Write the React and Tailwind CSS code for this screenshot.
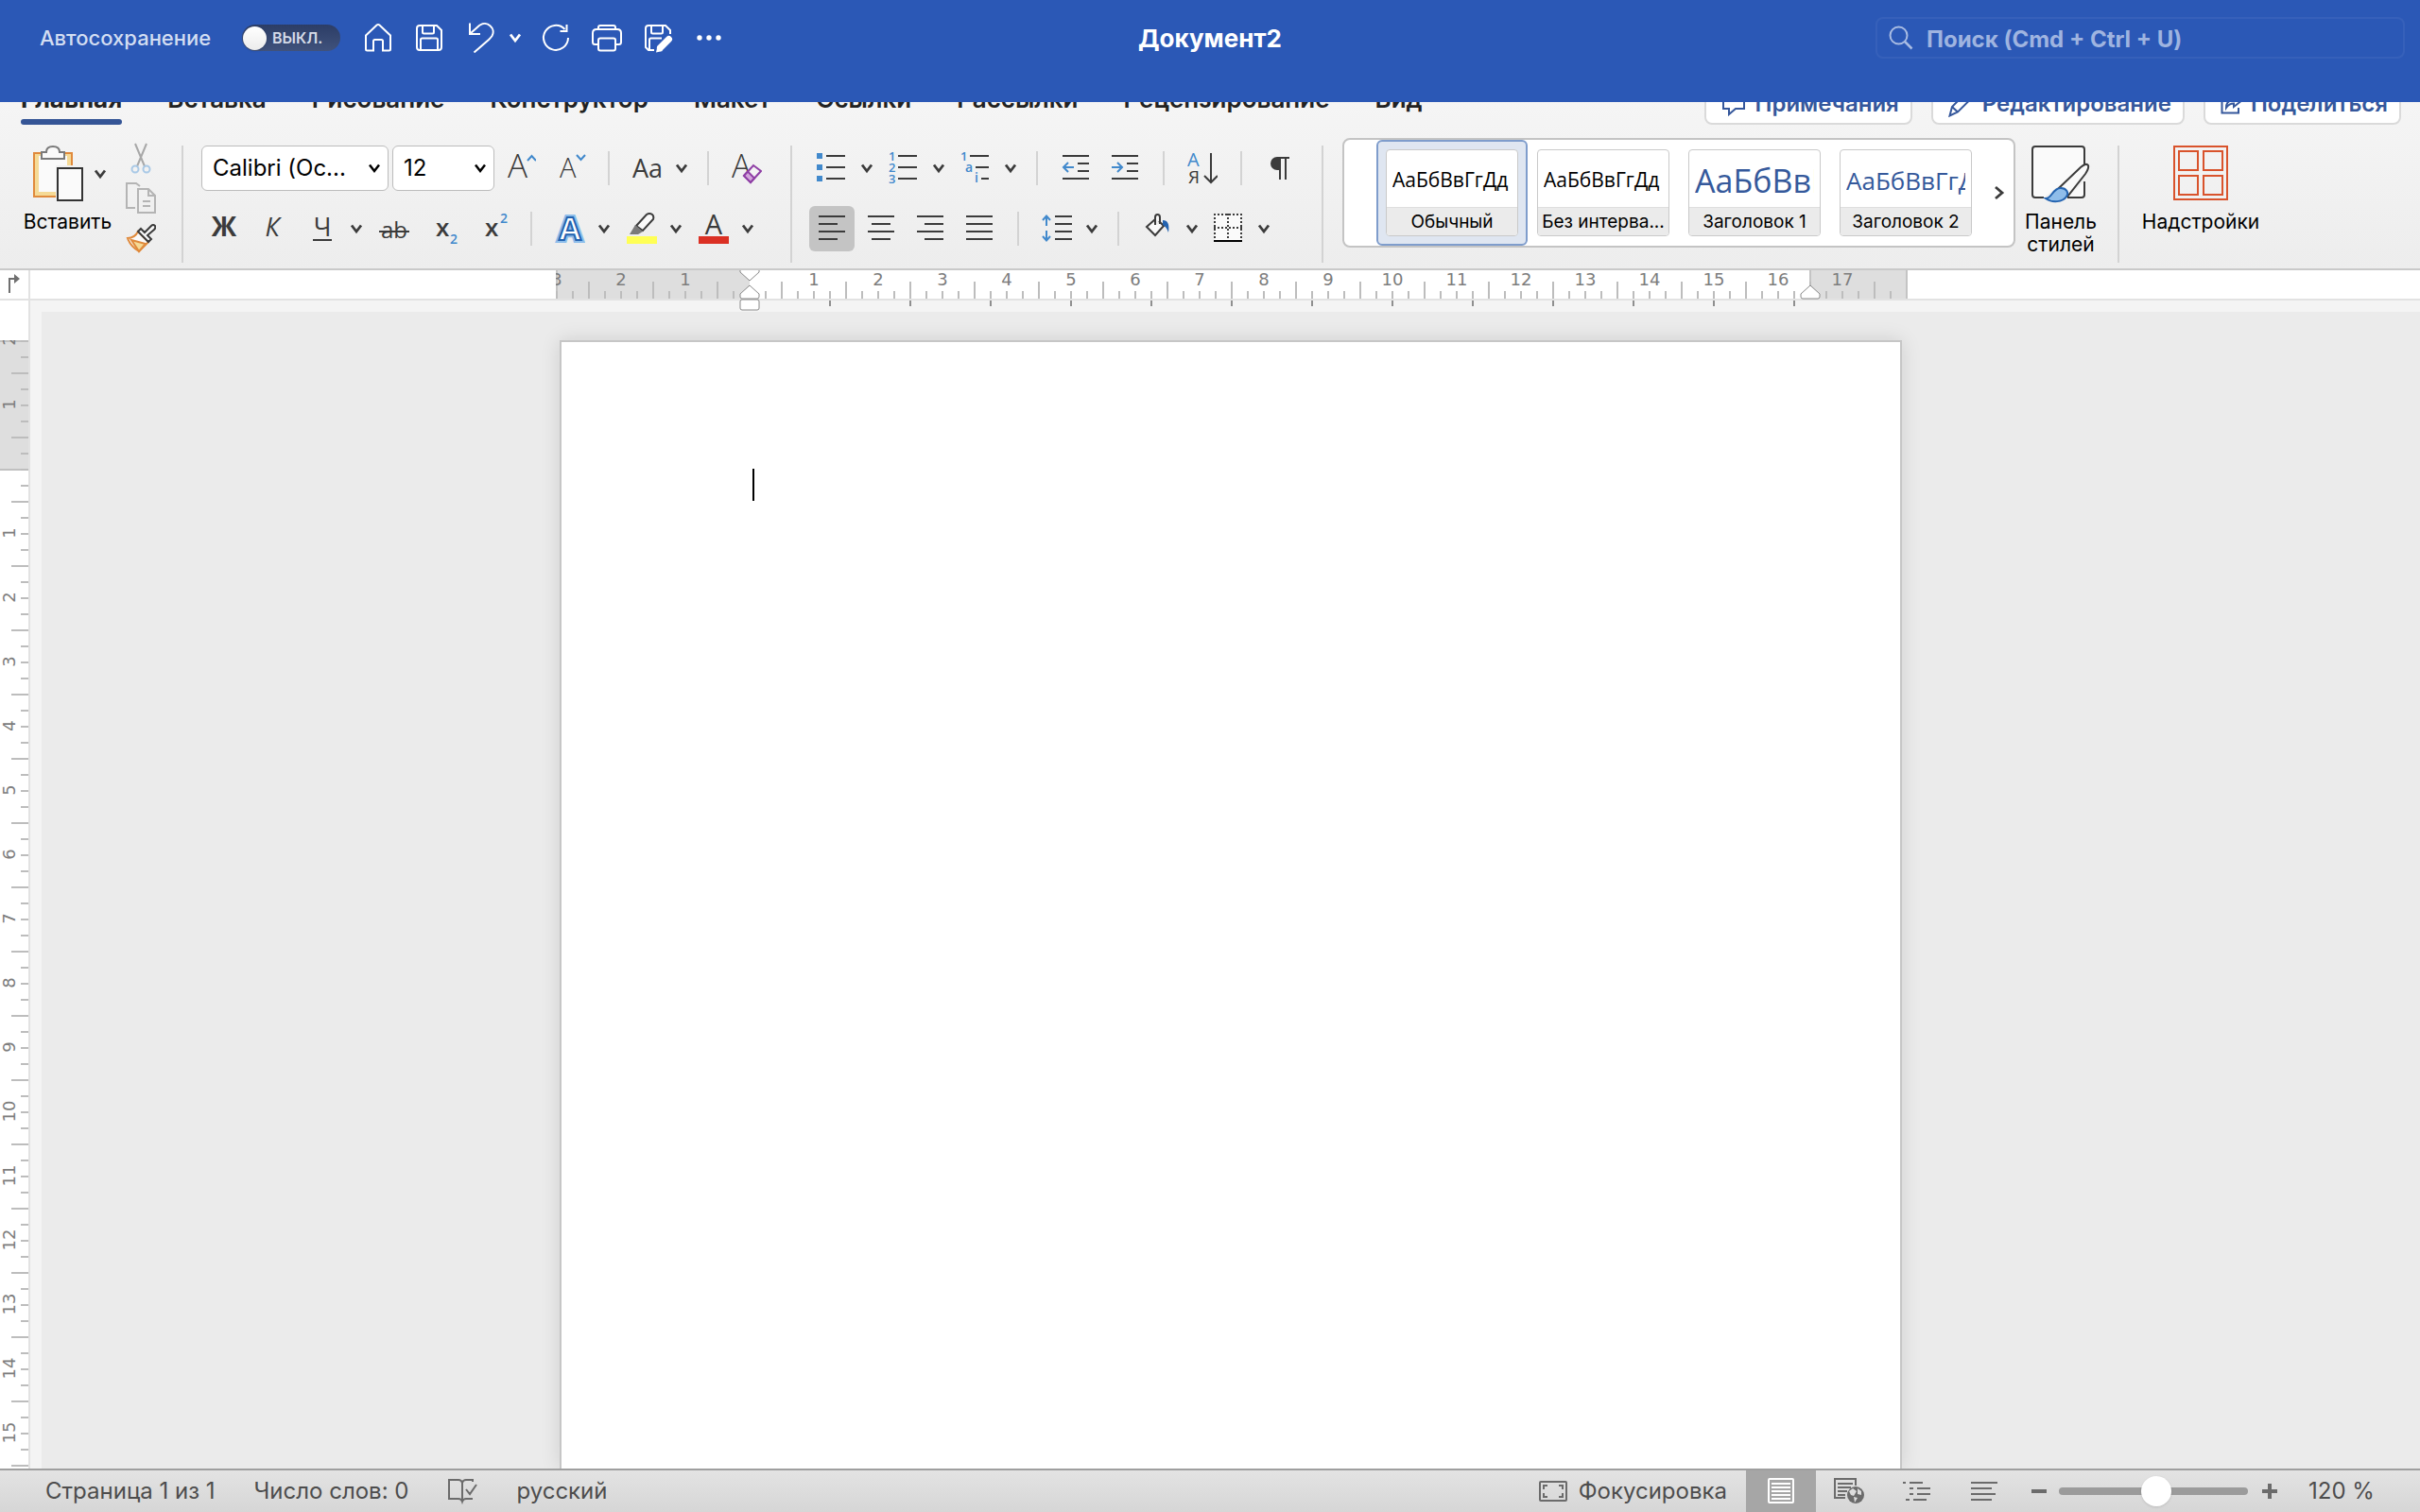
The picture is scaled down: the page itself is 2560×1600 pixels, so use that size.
import { useState } from "react"
import clsx from "clsx"

const CM = 68
const QUARTER = 17

const Svg = ({ w = 32, h = 36, className = "", children }) => (
  <svg
    width={w}
    height={h}
    viewBox={`0 0 ${w} ${h}`}
    fill="none"
    stroke="currentColor"
    strokeWidth="2"
    className={clsx("shrink-0", className)}
    aria-hidden="true"
  >
    {children}
  </svg>
)

const Chevron = ({ label, className }) => (
  <button type="button" aria-label={label} className={clsx("shrink-0", className)}>
    <Svg w={14} h={12}>
      <path d="M2 2.5 L7 9 L12 2.5" strokeWidth="2.8" />
    </Svg>
  </button>
)

const Tool = ({ label, className, children }) => (
  <button type="button" aria-label={label} className={clsx("w-8 shrink-0", className)}>
    <Svg>{children}</Svg>
  </button>
)

const Divider = ({ className }) => <span className={clsx("h-9 w-0.5 shrink-0 bg-[#d3d3d3]", className)} />
const GroupDivider = ({ className }) => (
  <span className={clsx("mt-2 h-[124px] w-0.5 shrink-0 bg-[#d3d3d3]", className)} />
)

// Letters inside toolbar icons
const Glyph = ({ x, y, size, weight = 400, fill = "#3b3b3b", children, ...rest }) => (
  <text x={x} y={y} fontSize={size} fontWeight={weight} fill={fill} stroke="none" fontFamily="Open Sans, sans-serif" {...rest}>
    {children}
  </text>
)

const TitleBar = () => {
  const [autosave, setAutosave] = useState(false)

  return (
    <header className="h-[108px] shrink-0 bg-[#2b58b6] text-white">
      <div className="grid h-20 grid-cols-[1fr_auto_1fr] items-center">
        <div className="flex items-center pl-[42px]">
          <label htmlFor="autosave" className="w-[184px] whitespace-nowrap text-[22px] font-medium text-[#d3def2]">
            Автосохранение
          </label>
          <label className="ml-[30px] flex h-7 w-[104px] items-center gap-1.5 rounded-full bg-gradient-to-b from-[#2c3d66] to-[#40527c] pl-px">
            <input
              id="autosave"
              type="checkbox"
              checked={autosave}
              onChange={(e) => setAutosave(e.target.checked)}
              className="sr-only"
            />
            <span className="h-[25px] w-[25px] rounded-full bg-gradient-to-b from-white to-[#ececec] shadow" />
            <span className="text-base font-semibold text-[#d5dbe8]">{autosave ? "ВКЛ." : "ВЫКЛ."}</span>
          </label>

          <button type="button" aria-label="Домой" className="ml-6">
            <Svg h={32}>
              <path d="M3 13.5 L14.6 2.6 Q16 1.4 17.4 2.6 L29 13.5 V28 Q29 29.5 27.5 29.5 H21 V19.5 Q21 18 19.5 18 H12.5 Q11 18 11 19.5 V29.5 H4.5 Q3 29.5 3 28 Z" />
            </Svg>
          </button>
          <button type="button" aria-label="Сохранить" className="ml-[22px]">
            <Svg h={32}>
              <path d="M6 3 H24 L29 8 V26 Q29 29 26 29 H6 Q3 29 3 26 V6 Q3 3 6 3 Z" />
              <path d="M9 3 V10 Q9 11.5 10.5 11.5 H19.5 Q21 11.5 21 10 V3 M7 29 V18 Q7 16.5 8.5 16.5 H23.5 Q25 16.5 25 18 V29" />
            </Svg>
          </button>
          <button type="button" aria-label="Отменить" className="ml-6">
            <Svg h={32}>
              <path d="M3 0.5 V12 H14 M3.5 11.5 L13 3 C21 -3 31 6 26.5 14 C25.5 15.5 24.5 16.5 23 18 L7.5 31.5" />
            </Svg>
          </button>
          <Chevron label="Список отмены" className="ml-3" />
          <button type="button" aria-label="Повторить" className="ml-5">
            <Svg h={32}>
              <path d="M29 16 A13 13 0 1 1 25.5 7 M27.5 2 V9 H20.5" />
            </Svg>
          </button>
          <button type="button" aria-label="Печать" className="ml-[22px]">
            <Svg h={32}>
              <path d="M7 7 V5 Q7 3 9 3 H23 Q25 3 25 5 V7 M7 23 H3.5 Q1 23 1 20.5 V11 Q1 7 5 7 H27 Q31 7 31 11 V20.5 Q31 23 28.5 23 H25" />
              <rect x="7" y="16.5" width="18" height="13" rx="2" />
            </Svg>
          </button>
          <button type="button" aria-label="Сохранить как" className="ml-[22px]">
            <Svg h={32}>
              <path d="M29 12 V8 L24 3 H6 Q3 3 3 6 V26 L6 29 H12 M9 3 V10 Q9 11.5 10.5 11.5 H19.5 Q21 11.5 21 10 V3 M7 29 V18 Q7 16.5 8.5 16.5 H20" />
              <path d="M18.5 26.5 L27.5 17.5" strokeWidth="7" strokeLinecap="round" />
              <path d="M14 31.5 L15.5 24.5 L21 30 Z" fill="currentColor" stroke="none" />
            </Svg>
          </button>
          <button type="button" aria-label="Ещё" className="ml-[22px]">
            <Svg h={32}>
              <g fill="currentColor" stroke="none">
                <circle cx="6" cy="16" r="2.7" />
                <circle cx="16" cy="16" r="2.7" />
                <circle cx="26" cy="16" r="2.7" />
              </g>
            </Svg>
          </button>
        </div>

        <h1 className="text-[26px] font-bold">Документ2</h1>

        <label className="mr-4 flex h-11 w-[560px] items-center gap-3.5 justify-self-end rounded-lg border-2 border-white/5 pl-3">
          <Svg w={26} h={26} className="text-[#a9bce3]">
            <circle cx="10.5" cy="10.5" r="9" />
            <path d="M17 17 L24.5 24.5" strokeWidth="2.5" />
          </Svg>
          <input
            type="search"
            aria-label="Поиск"
            placeholder="Поиск (Cmd + Ctrl + U)"
            className="h-10 min-w-0 flex-1 bg-transparent pt-0.5 text-2xl font-bold outline-none placeholder:text-[#9fb4e0]"
          />
        </label>
      </div>
    </header>
  )
}

const tabs = [
  "Главная",
  "Вставка",
  "Рисование",
  "Конструктор",
  "Макет",
  "Ссылки",
  "Рассылки",
  "Рецензирование",
  "Вид",
]

const ActionButton = ({ icon, children }) => (
  <button
    type="button"
    className="flex h-11 items-center gap-2.5 rounded-lg border-2 border-[#dadada] bg-white pl-4 pr-3 text-2xl font-semibold text-[#35579b]"
  >
    {icon}
    {children}
  </button>
)

const Tabs = () => {
  const [active, setActive] = useState("Главная")

  return (
    <div className="flex h-6 items-end justify-between overflow-hidden pl-[22px] pr-5">
      <nav className="flex gap-12">
        {tabs.map((tab) => (
          <button key={tab} type="button" onClick={() => setActive(tab)} className="flex flex-col gap-[5px]">
            <span className={clsx("text-[26px] leading-8 text-[#222]", tab === active ? "font-bold" : "font-semibold")}>
              {tab}
            </span>
            <span className={clsx("h-1.5 w-full rounded-full", tab === active && "bg-[#355596]")} />
          </button>
        ))}
      </nav>
      <div className="flex gap-5">
        <ActionButton
          icon={
            <Svg w={26} h={26}>
              <path d="M2 2 H24 V18 H15 L8 24 V18 H2 Z" />
            </Svg>
          }
        >
          Примечания
        </ActionButton>
        <ActionButton
          icon={
            <Svg w={26} h={28}>
              <path d="M1.5 26.5 L4 17 L18 3 Q21 1 23.5 3.5 Q25.5 6 23.5 9 L10 22.5 Z M4 17 L10 22.5" />
            </Svg>
          }
        >
          Редактирование
        </ActionButton>
        <ActionButton
          icon={
            <Svg w={22} h={22}>
              <path d="M9 3 H1.5 V20.5 H19 V15 M6 15 C6 9 10 7 14 7 V3 L20.5 9 L14 14 V10.5 C10 10.5 8 12 6 15 Z" />
            </Svg>
          }
        >
          Поделиться
        </ActionButton>
      </div>
    </div>
  )
}

const Clipboard = () => (
  <div className="mt-1 flex">
    <div className="flex w-[93px] flex-col items-center">
      <div className="flex items-center">
        <button type="button" aria-label="Вставить из буфера">
          <Svg w={58} h={68}>
            <rect x="5" y="12" width="40" height="46" fill="#f5da96" stroke="#e08a3c" />
            <rect x="10" y="15" width="30" height="38" fill="#fafafa" stroke="none" />
            <path
              d="M13 11 H18 C18 6 22 5 25 5 C28 5 32 6 32 11 H37 V18 H13 Z"
              fill="#fafafa"
              stroke="#7a7a7a"
            />
            <rect x="28" y="25" width="28" height="36" fill="#f1f1f1" stroke="none" />
            <rect x="30" y="28" width="26" height="34" fill="#fafafa" stroke="#333" />
          </Svg>
        </button>
        <Chevron label="Параметры вставки" className="ml-2.5 text-[#3b3b3b]" />
      </div>
      <span className="mt-[5px] text-[21px] leading-6 text-black">Вставить</span>
    </div>
    <div className="ml-[15px] flex flex-col gap-2">
      <button type="button" aria-label="Вырезать">
        <Svg h={34}>
          <path d="M10 2 L20 26 M22 2 L12 26" stroke="#a8a8a8" />
          <circle cx="10" cy="29" r="3.5" stroke="#a9c9e6" />
          <circle cx="22" cy="29" r="3.5" stroke="#a9c9e6" />
        </Svg>
      </button>
      <button type="button" aria-label="Копировать">
        <Svg h={34}>
          <path
            d="M10 28 H1 V2 H11 L15 5 M13 8 H24 L31 15 V33 H13 Z M24 8 V15 H31 M18 21 H26 M18 26 H26"
            stroke="#b4b4b4"
          />
        </Svg>
      </button>
      <button type="button" aria-label="Формат по образцу" className="mt-0.5">
        <Svg h={34}>
          <path d="M2 16 C7 16 11 13 13 9 L24 20 L14 30 C9 27 4 22 2 16 Z" fill="#fafafa" stroke="#e08a3c" />
          <path d="M6 18 L21 22 L14 30 Z" fill="#f5da96" stroke="#e08a3c" />
          <path
            d="M13 9 L16 6 L20 10 L27 3 Q29 1 31 3 Q32 5 30 7 L23 13 L27 17 L24 20 Z"
            fill="#fafafa"
            stroke="#3b3b3b"
          />
        </Svg>
      </button>
    </div>
  </div>
)

const Dropdown = ({ label, value, options, onChange, className }) => (
  <div className={clsx("relative shrink-0 text-black", className)}>
    <select
      aria-label={label}
      value={value}
      onChange={(e) => onChange(e.target.value)}
      className="h-12 w-full appearance-none rounded-md border border-[#bcbcbc] bg-white pl-[11px] text-2xl outline-none"
    >
      {options.map((option) => (
        <option key={option}>{option}</option>
      ))}
    </select>
    <Svg w={14} h={12} className="pointer-events-none absolute right-2 top-[18px]">
      <path d="M2 2.5 L7 9 L12 2.5" strokeWidth="2.5" />
    </Svg>
  </div>
)

const FontGroup = () => {
  const [font, setFont] = useState("Calibri (Ос...")
  const [size, setSize] = useState("12")

  return (
    <div className="mt-2 flex flex-col gap-4">
      <div className="flex h-12 items-center">
        <Dropdown
          label="Шрифт"
          value={font}
          onChange={setFont}
          options={["Calibri (Ос...", "Arial", "Times New Roman"]}
          className="w-[198px]"
        />
        <Dropdown
          label="Размер шрифта"
          value={size}
          onChange={setSize}
          options={["10", "11", "12", "14"]}
          className="ml-1 w-[108px]"
        />
        <Tool label="Увеличить размер" className="ml-3">
          <Glyph x="2" y="28" size="35" weight={300}>А</Glyph>
          <path d="M23 10 L27.5 5 L32 10" stroke="#4189cc" />
        </Tool>
        <Tool label="Уменьшить размер" className="ml-6">
          <Glyph x="1" y="28" size="29" weight={300}>А</Glyph>
          <path d="M19 4 L23.5 9 L28 4" stroke="#4189cc" />
        </Tool>
        <Divider className="ml-5" />
        <Tool label="Регистр" className="ml-6">
          <Glyph x="0" y="28" size="27">Аа</Glyph>
        </Tool>
        <Chevron label="Параметры регистра" className="ml-[13px]" />
        <Divider className="ml-5" />
        <Tool label="Очистить формат" className="ml-6">
          <Glyph x="0" y="28" size="34" weight={300}>А</Glyph>
          <path d="M13 26 L23 15 L31 21 L20 33 Z" fill="#f4f4f4" stroke="#8f3fa5" />
          <path d="M13 26 L17 21.5 L24 28.5 L20 33 Z" fill="#d3a6dc" stroke="#8f3fa5" />
        </Tool>
      </div>
      <div className="flex h-12 items-center pl-2">
        <Tool label="Полужирный">
          <Glyph x="16" y="26" size="28" weight={700} textAnchor="middle">Ж</Glyph>
        </Tool>
        <Tool label="Курсив" className="ml-5">
          <Glyph x="15" y="26" size="27" textAnchor="middle" fontStyle="italic">К</Glyph>
        </Tool>
        <Tool label="Подчёркнутый" className="ml-5">
          <Glyph x="16" y="26" size="27" textAnchor="middle">Ч</Glyph>
          <path d="M6 30 H26" />
        </Tool>
        <Chevron label="Параметры подчёркивания" className="ml-[13px]" />
        <Tool label="Зачёркнутый" className="ml-[17px]">
          <Glyph x="16" y="28" size="24" textAnchor="middle">ab</Glyph>
          <path d="M0 21 H32" />
        </Tool>
        <Tool label="Подстрочный" className="ml-6">
          <Glyph x="4" y="26" size="26" weight={600}>x</Glyph>
          <Glyph x="19" y="34" size="14" weight={600} fill="#4189cc">2</Glyph>
        </Tool>
        <Tool label="Надстрочный" className="ml-5">
          <Glyph x="4" y="26" size="26" weight={600}>x</Glyph>
          <Glyph x="20" y="12" size="14" weight={600} fill="#4189cc">2</Glyph>
        </Tool>
        <Divider className="ml-5" />
        <Tool label="Эффекты текста" className="ml-6">
          <text x="16" y="30" fontSize="34" fontWeight="700" textAnchor="middle" fontFamily="Open Sans, sans-serif" fill="none" stroke="#8dbdea" strokeWidth="6">
            А
          </text>
          <text x="16" y="30" fontSize="34" fontWeight="700" textAnchor="middle" fontFamily="Open Sans, sans-serif" fill="#fff" stroke="#2363b0" strokeWidth="2">
            А
          </text>
        </Tool>
        <Chevron label="Параметры эффектов" className="ml-[13px]" />
        <Tool label="Цвет выделения" className="ml-[17px]">
          <rect x="0" y="26" width="32" height="8" fill="#ffff55" stroke="none" />
          <path d="M10 15 L21 3 Q24 1 27 3 Q29 5 28 8 L17 20 Z" fill="#fafafa" stroke="#3b3b3b" />
          <path d="M9 14 L17 21 L12 24 H3 Z" fill="#7a7a7a" stroke="none" />
        </Tool>
        <Chevron label="Параметры выделения" className="ml-[13px]" />
        <Tool label="Цвет текста" className="ml-[17px]">
          <rect x="0" y="26" width="32" height="8" fill="#db3024" stroke="none" />
          <Glyph x="16" y="24" size="29" textAnchor="middle">А</Glyph>
        </Tool>
        <Chevron label="Параметры цвета" className="ml-[13px]" />
      </div>
    </div>
  )
}

const alignments = [
  { id: "left", label: "По левому краю", d: "M2 5 H30 M2 13 H22 M2 21 H30 M2 29 H22" },
  { id: "center", label: "По центру", d: "M2 5 H30 M6 13 H26 M2 21 H30 M6 29 H26" },
  { id: "right", label: "По правому краю", d: "M2 5 H30 M10 13 H30 M2 21 H30 M10 29 H30" },
  { id: "justify", label: "По ширине", d: "M2 5 H30 M2 13 H30 M2 21 H30 M2 29 H30" },
]

const ParagraphGroup = () => (
  <div className="mt-2 flex flex-col gap-4">
    <div className="flex h-12 items-center pl-2">
      <Tool label="Маркеры">
        <path d="M0 5 H6 M0 17 H6 M0 29 H6" stroke="#4189cc" strokeWidth="6" />
        <path d="M10 5 H30 M10 17 H30 M10 29 H30" />
      </Tool>
      <Chevron label="Параметры маркеров" className="ml-3.5" />
      <Tool label="Нумерация" className="ml-4">
        <Glyph x="0" y="10" size="13" weight={600} fill="#4189cc">1</Glyph>
        <Glyph x="0" y="22" size="13" weight={600} fill="#4189cc">2</Glyph>
        <Glyph x="0" y="34" size="13" weight={600} fill="#4189cc">3</Glyph>
        <path d="M10 5 H30 M10 17 H30 M10 29 H30" />
      </Tool>
      <Chevron label="Параметры нумерации" className="ml-3.5" />
      <Tool label="Многоуровневый список" className="ml-4">
        <Glyph x="0" y="10" size="13" weight={600} fill="#4189cc">1</Glyph>
        <Glyph x="5" y="22" size="14" weight={600} fill="#4189cc">a</Glyph>
        <Glyph x="15" y="33" size="14" weight={600} fill="#4189cc">i</Glyph>
        <path d="M10 5 H30 M16 17 H30 M22 29 H30" />
      </Tool>
      <Chevron label="Параметры списка" className="ml-3.5" />
      <Divider className="ml-5" />
      <Tool label="Уменьшить отступ" className="ml-6">
        <path d="M2 5 H30 M18 13 H30 M18 21 H30 M2 29 H30" />
        <path d="M14 17 H3 M8 12 L3 17 L8 22" stroke="#4189cc" />
      </Tool>
      <Tool label="Увеличить отступ" className="ml-5">
        <path d="M2 5 H30 M18 13 H30 M18 21 H30 M2 29 H30" />
        <path d="M2 17 H13 M8 12 L13 17 L8 22" stroke="#4189cc" />
      </Tool>
      <Divider className="ml-6" />
      <Tool label="Сортировка" className="ml-6">
        <Glyph x="0" y="16" size="20" fill="#4189cc">А</Glyph>
        <Glyph x="1" y="34" size="19">Я</Glyph>
        <path d="M25 2 V33 M18 26 L25 33 L32 26" />
      </Tool>
      <Divider className="ml-6" />
      <Tool label="Непечатаемые символы" className="ml-6">
        <path d="M13 7 H26 M16 7 V30 M22 7 V30" />
        <path d="M16 6 H13 A7 7 0 0 0 13 20 H16 Z" fill="currentColor" stroke="none" />
      </Tool>
    </div>
    <div className="flex h-12 items-center">
      {alignments.map(({ id, label, d }) => (
        <button
          key={id}
          type="button"
          aria-label={label}
          className={clsx(
            "flex h-12 shrink-0 items-center justify-center",
            id === "left" && "w-12 rounded-md bg-[#c4c4c4]",
            id === "center" && "ml-3 w-8",
            (id === "right" || id === "justify") && "ml-5 w-8",
          )}
        >
          <Svg>
            <path d={d} />
          </Svg>
        </button>
      ))}
      <Divider className="ml-6" />
      <Tool label="Интервал" className="ml-6">
        <path d="M14 5 H32 M14 13 H32 M14 21 H32 M14 29 H32" />
        <path d="M5 15 V5 M1 9 L5 4.5 L9 9 M5 20 V30 M1 26 L5 30.5 L9 26" stroke="#4189cc" />
      </Tool>
      <Chevron label="Параметры интервала" className="ml-3.5" />
      <Divider className="ml-5" />
      <Tool label="Заливка" className="ml-6">
        <path d="M14 8 L5 16 L14 25 L23 15 L18 10 M14 14 V6 Q14 3 16.5 3 Q19 3 19 6 V13" fill="#fafafa" />
        <path d="M22 9 Q30 9 28 22 Q26 16 22 14 Z" fill="#2363b0" stroke="none" />
      </Tool>
      <Chevron label="Параметры заливки" className="ml-3.5" />
      <Tool label="Границы" className="ml-4">
        <rect x="1" y="3" width="28" height="29" fill="#fafafa" stroke="none" />
        <path d="M0 3 H30 M1 2 V30 M29 2 V30 M15 2 V30 M0 17 H30" strokeDasharray="2 2" />
        <path d="M0 31 H30" stroke="#000" />
      </Tool>
      <Chevron label="Параметры границ" className="ml-3.5" />
    </div>
  </div>
)

const docStyles = [
  { name: "Обычный", sample: "АаБбВвГгДд", text: "text-[21px] text-black" },
  { name: "Без интерва...", sample: "АаБбВвГгДд", text: "text-[21px] text-black" },
  { name: "Заголовок 1", sample: "АаБбВвГгДд", text: "text-[34px] text-[#35599b]" },
  { name: "Заголовок 2", sample: "АаБбВвГгДд", text: "text-[26px] text-[#35599b]" },
]

const StyleGallery = () => {
  const [selected, setSelected] = useState("Обычный")

  return (
    <div className="ml-5 flex h-[116px] w-[712px] shrink-0 items-center justify-between rounded-lg border-2 border-[#c4c4c4] bg-white pl-[34px] pr-2">
      <div className="flex">
        {docStyles.map(({ name, sample, text }) => (
          <button
            key={name}
            type="button"
            onClick={() => setSelected(name)}
            className={clsx(
              "w-40 rounded-md border-2 p-2",
              selected === name ? "border-[#7f9dcc] bg-[#dfe6f1]" : "border-transparent",
            )}
          >
            <span className="block overflow-hidden rounded-sm border border-[#c9c9c9] bg-white">
              <span
                className={clsx(
                  "mx-1.5 flex h-[60px] items-center overflow-hidden whitespace-nowrap pt-1 font-['Open_Sans',sans-serif]",
                  text,
                )}
              >
                {sample}
              </span>
              <span className="block h-[30px] border-t border-[#dedede] bg-[#ebebeb] text-[19px] leading-[29px] text-black">
                {name}
              </span>
            </span>
          </button>
        ))}
      </div>
      <button type="button" aria-label="Другие стили">
        <Svg w={14} h={16}>
          <path d="M3 2 L10 8 L3 14" strokeWidth="2.8" />
        </Svg>
      </button>
    </div>
  )
}

const Ribbon = () => (
  <section className="h-[178px] shrink-0 border-b-2 border-[#c9c9c9] bg-gradient-to-b from-[#f5f5f5] to-[#ededed] text-[#3b3b3b]">
    <Tabs />
    <div className="flex items-start pl-[25px] pt-3.5">
      <Clipboard />
      <GroupDivider className="ml-[27px] mr-[19px]" />
      <FontGroup />
      <GroupDivider className="ml-[30px] mr-[18px]" />
      <ParagraphGroup />
      <GroupDivider className="ml-7" />
      <StyleGallery />
      <button type="button" className="ml-2 mt-2 flex w-20 shrink-0 flex-col items-center gap-[7px]">
        <Svg w={62} h={62}>
          <path d="M56 22 V4 Q56 1 53 1 H4 Q1 1 1 4 V52 Q1 55 4 55 H13 M38 55 H53 Q56 55 56 52 V38" fill="#fafafa" />
          <path d="M28 46 L52 23 Q58 18 60 21 Q61 24 57 30 L38 54 Z" fill="#fafafa" />
          <path
            d="M15 56 C22 56 22 45 31 45 C37 45 40 50 37 54 C33 60 22 61 15 56 Z"
            fill="#8fbdea"
            stroke="#2363b0"
          />
        </Svg>
        <span className="text-[21px] leading-6 text-black">Панель стилей</span>
      </button>
      <GroupDivider className="ml-5" />
      <button type="button" className="ml-6 mt-2 flex w-[124px] shrink-0 flex-col items-center gap-[7px]">
        <Svg w={58} h={62} className="text-[#d9532c]">
          <rect x="1" y="1" width="56" height="56" />
          <path d="M6 6 H26 V26 H6 Z M32 6 H52 V26 H32 Z M6 32 H26 V52 H6 Z M32 32 H52 V52 H32 Z" />
        </Svg>
        <span className="text-[21px] leading-6 text-black">Надстройки</span>
      </button>
    </div>
  </section>
)

const HorizontalRuler = () => {
  const zero = 207
  const end = 1329
  const ticks = []
  for (let i = -12; i <= 71; i++) ticks.push(i)
  const labels = []
  for (let i = -3; i <= 17; i++) if (i !== 0) labels.push(i)
  const stops = Array.from({ length: 13 }, (_, i) => zero + (i + 1) * 85)

  return (
    <div className="relative z-10 flex h-8 justify-center border-b-2 border-[#e2e2e2] bg-white pl-3">
      <svg width="1432" height="44" className="shrink-0" aria-hidden="true">
        <rect x="2" y="0" width={zero - 2} height="30" fill="#dedede" />
        <rect x={end} y="0" width={1432 - end} height="30" fill="#dedede" />
        <path d={`M${end} 0 V30 M1431 0 V30 M3 0 V30`} stroke="#c4c4c4" strokeWidth="2" />
        {ticks.map((i) => (
          <path
            key={i}
            d={`M${zero + i * QUARTER} 30 V${i % 4 === 0 || i % 2 !== 0 ? 22 : 12}`}
            stroke="#bdbdbd"
            strokeWidth="2"
          />
        ))}
        {labels.map((i) => (
          <text
            key={i}
            x={zero + i * CM}
            y="16"
            fontSize="18"
            textAnchor="middle"
            fill="#7d7d7d"
            fontFamily="DejaVu Sans, sans-serif"
          >
            {Math.abs(i)}
          </text>
        ))}
        {stops.map((x) => (
          <path key={x} d={`M${x} 32 V38`} stroke="#8f8f8f" strokeWidth="2" />
        ))}
        <g fill="#fff" stroke="#8a8a8a">
          <path d="M197 -1 V2 L207 11 L217 2 V-1 Z" />
          <path d="M207 16 L217 25 V28 Q217 30 215 30 H199 Q197 30 197 28 V25 Z" />
          <rect x="197" y="31" width="20" height="11" rx="2" />
          <path d={`M${end} 16 L${end + 10} 25 V28 Q${end + 10} 30 ${end + 8} 30 H${end - 8} Q${end - 10} 30 ${end - 10} 28 V25 Z`} />
        </g>
        <rect x="0" y="0" width="2" height="30" fill="#fff" />
      </svg>
    </div>
  )
}

const VerticalRuler = () => {
  const zero = 179
  const ticks = []
  for (let i = -8; i <= 100; i++) ticks.push(i)
  const labels = []
  for (let i = -2; i <= 25; i++) if (i !== 0) labels.push(i)

  return (
    <div className="min-h-0 flex-1 overflow-hidden">
      <svg width="30" height="1800" aria-hidden="true">
        <rect x="0" y="42" width="30" height={zero - 42} fill="#dedede" />
        <path d={`M0 43 H30 M0 ${zero} H30`} stroke="#c0c0c0" strokeWidth="2" />
        {ticks.map((i) => (
          <path
            key={i}
            d={`M30 ${zero + i * QUARTER} H${i % 4 === 0 || i % 2 !== 0 ? 22 : 12}`}
            stroke="#bdbdbd"
            strokeWidth="2"
          />
        ))}
        {labels.map((i) => (
          <text
            key={i}
            textAnchor="middle"
            fontSize="18"
            fill="#7d7d7d"
            fontFamily="DejaVu Sans, sans-serif"
            transform={`translate(16 ${zero - 1 + i * CM}) rotate(-90)`}
          >
            {Math.abs(i)}
          </text>
        ))}
        <rect x="0" y="0" width="30" height="42" fill="#fff" />
      </svg>
    </div>
  )
}

const Workspace = () => (
  <main className="flex min-h-0 flex-1">
    <div className="flex w-8 shrink-0 flex-col border-r-2 border-[#e2e2e2] bg-white">
      <button
        type="button"
        aria-label="Позиция табуляции"
        className="h-8 shrink-0 border-b-2 border-[#e2e2e2] text-[#6f6f6f]"
      >
        <Svg w={30} h={30}>
          <path d="M10 24 V9 H16" />
          <path d="M15 4 L21 9 L15 14 Z" fill="currentColor" stroke="none" />
        </Svg>
      </button>
      <VerticalRuler />
    </div>
    <div className="flex min-w-0 flex-1 flex-col bg-[#f4f4f4]">
      <HorizontalRuler />
      <div className="ml-3 mt-3 flex min-h-0 flex-1 justify-center overflow-hidden bg-[#ebebeb] pt-[30px]">
        <article className="w-[1420px] shrink-0 border-2 border-b-0 border-[#c6c6c6] bg-white pl-[202px] pt-[134px] shadow-[0_0_20px_rgba(0,0,0,0.12)]">
          <span className="block h-[34px] w-0.5 bg-black" />
        </article>
      </div>
    </div>
  </main>
)

const StatusBar = () => {
  const [zoom, setZoom] = useState(52)

  return (
    <footer className="flex h-[46px] shrink-0 items-center justify-between border-t-2 border-[#9f9f9f] bg-gradient-to-b from-[#e3e3e3] to-[#d6d6d6] pl-12 text-2xl text-[#4d4d4d]">
      <div className="flex items-center gap-[41px]">
        <span>Страница 1 из 1</span>
        <span>Число слов: 0</span>
        <button type="button" aria-label="Правописание" className="text-[#6b6b6b]">
          <Svg h={28}>
            <path d="M16 25 V5 Q15 2 12 2 H2 V22 H12 Q15 22 16 25 Q17 22 20 22 H27 M16 5 Q17 2 20 2 H27 V4 M20 12 L24 17 L31 7" />
          </Svg>
        </button>
        <span>русский</span>
      </div>
      <div className="flex h-full items-center text-[#6b6b6b]">
        <button type="button" className="flex items-center gap-3 text-[#4d4d4d]">
          <Svg w={30} h={22} className="text-[#6b6b6b]">
            <rect x="1" y="1" width="28" height="20" rx="1" />
            <path d="M5 9 V5 H9 M21 5 H25 V9 M25 13 V17 H21 M9 17 H5 V13" />
          </Svg>
          Фокусировка
        </button>
        <button
          type="button"
          aria-label="Разметка страницы"
          className="ml-5 flex h-full w-[74px] items-center justify-center bg-[#a6a6a6] text-white"
        >
          <Svg w={28} h={28}>
            <rect x="1" y="1" width="26" height="25" rx="1" />
            <path d="M4 6 H24 M4 10 H24 M4 14 H24 M4 18 H24 M4 22 H24" />
          </Svg>
        </button>
        <button type="button" aria-label="Веб-документ" className="ml-[19px]">
          <Svg h={28}>
            <path d="M12 21 H1 V1 H23 V8 M4 6 H20 M4 10 H18 M4 14 H14 M4 18 H12" />
            <circle cx="23" cy="18" r="9" fill="currentColor" stroke="none" />
            <path d="M16 14 L20 11 L24 14 L21 19 L18 18 Z M21 20 L25 21 L22 26 Z M25 11 L29 14 L29 18 L25 17 Z" fill="#dcdcdc" stroke="none" />
          </Svg>
        </button>
        <button type="button" aria-label="Структура" className="ml-10">
          <Svg h={28}>
            <path d="M1 5 H4 M8 5 H22 M8 11 H12 M16 11 H30 M8 17 H12 M16 17 H30 M4 23 H8 M12 23 H26" />
          </Svg>
        </button>
        <button type="button" aria-label="Черновик" className="ml-10">
          <Svg h={28}>
            <path d="M1 5 H29 M1 11 H23 M1 17 H27 M1 23 H23" />
          </Svg>
        </button>
        <button type="button" aria-label="Уменьшить масштаб" className="ml-8">
          <Svg w={18} h={18}>
            <path d="M1 9 H17" strokeWidth="4" />
          </Svg>
        </button>
        <input
          type="range"
          aria-label="Масштаб"
          value={zoom}
          onChange={(e) => setZoom(Number(e.target.value))}
          className="ml-3 h-8 w-[200px] appearance-none bg-transparent [&::-webkit-slider-runnable-track]:h-2 [&::-webkit-slider-runnable-track]:rounded-full [&::-webkit-slider-runnable-track]:bg-[#9b9b9b] [&::-webkit-slider-thumb]:-mt-3 [&::-webkit-slider-thumb]:h-8 [&::-webkit-slider-thumb]:w-8 [&::-webkit-slider-thumb]:appearance-none [&::-webkit-slider-thumb]:rounded-full [&::-webkit-slider-thumb]:bg-white [&::-webkit-slider-thumb]:shadow"
        />
        <button type="button" aria-label="Увеличить масштаб" className="ml-3.5">
          <Svg w={18} h={18}>
            <path d="M1 9 H17 M9 1 V17" strokeWidth="4" />
          </Svg>
        </button>
        <span className="ml-8 w-[118px] whitespace-nowrap text-[#4d4d4d]">120 %</span>
      </div>
    </footer>
  )
}

const App = () => (
  <div className="flex h-screen flex-col overflow-hidden font-['Inter',sans-serif]">
    <TitleBar />
    <Ribbon />
    <Workspace />
    <StatusBar />
  </div>
)

export default App
